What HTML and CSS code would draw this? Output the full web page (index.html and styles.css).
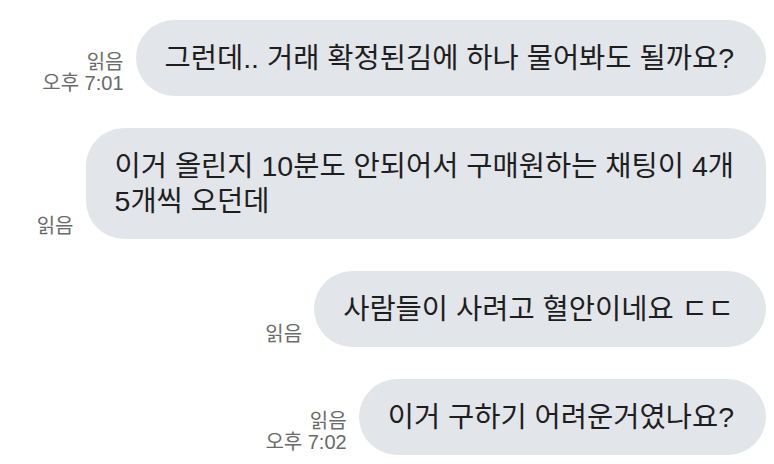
FILE: index.html
```html
<!DOCTYPE html>
<html lang="ko">
<head>
<meta charset="utf-8">
<link rel="stylesheet" href="styles.css">
</head>
<body>
<div class="chat">
  <div class="row">
    <div class="meta"><span>읽음</span><span>오후 7:01</span></div>
    <div class="bubble">그런데.. 거래 확정된김에 하나 물어봐도 될까요?</div>
  </div>
  <div class="row">
    <div class="meta"><span>읽음</span></div>
    <div class="bubble">이거 올린지 10분도 안되어서 구매원하는 채팅이 4개<br>5개씩 오던데</div>
  </div>
  <div class="row">
    <div class="meta"><span>읽음</span></div>
    <div class="bubble">사람들이 사려고 혈안이네요 ㄷㄷ</div>
  </div>
  <div class="row">
    <div class="meta"><span>읽음</span><span>오후 7:02</span></div>
    <div class="bubble">이거 구하기 어려운거였나요?</div>
  </div>
</div>
</body>
</html>
```

FILE: styles.css
```css
html, body {
  margin: 0;
  padding: 0;
  background: #ffffff;
}

body {
  font-family: "Liberation Sans", "Noto Sans CJK KR", sans-serif;
}

.chat {
  display: flex;
  flex-direction: column;
  align-items: flex-end;
  gap: 32px;
  padding: 20px 8px 0 0;
}

.row {
  display: flex;
  align-items: flex-end;
  gap: 12px;
}

.meta {
  display: flex;
  flex-direction: column;
  align-items: flex-end;
  font-size: 20px;
  line-height: 21px;
  color: #6a6a6a;
  margin-bottom: 2px;
  white-space: nowrap;
}

.bubble {
  background: #e2e5ea;
  color: #1e1e1e;
  font-size: 28.5px;
  line-height: 35px;
  padding: 20.5px 32px 20.5px 29px;
  border-radius: 38px;
  white-space: nowrap;
}
```
